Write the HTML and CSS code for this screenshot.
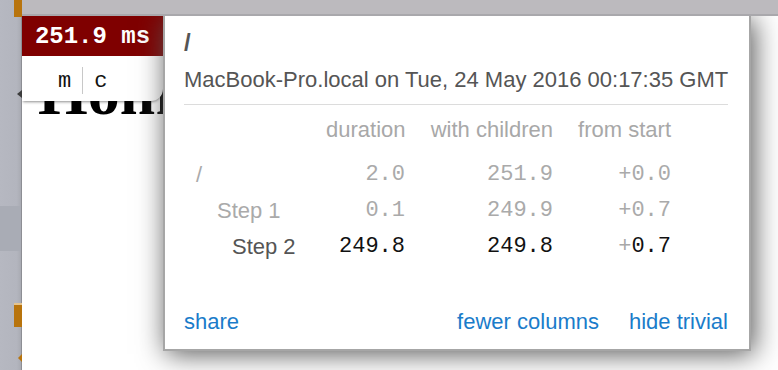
FILE: index.html
```html
<!DOCTYPE html>
<html lang="en">
<head>
    <meta charset="UTF-8">
    <meta name="viewport" content="width=device-width, initial-scale=1.0">
    <title>Home</title>
    <link rel="stylesheet" href="styles.css">
</head>
<body>

<div class="screen">
    <aside class="dock">
        <span class="dock-tab"></span>
        <span class="dock-arrow"></span>
        <span class="dock-band"></span>
        <span class="dock-folder"></span>
        <span class="dock-pin"></span>
    </aside>

    <div class="window">
        <div class="toolbar"></div>

        <main class="page">
            <h1 class="page-title">Home</h1>

            <!-- profiler badge, top left -->
            <div class="profiler-results">
                <div class="profiler-button">251.9 ms</div>
                <div class="profiler-controls">
                    <span class="profiler-key">m</span>
                    <span class="profiler-sep"></span>
                    <span class="profiler-key">c</span>
                </div>
            </div>

            <!-- timing popup -->
            <div class="profiler-popup">
                <div class="profiler-name">/</div>
                <div class="profiler-server">MacBook-Pro.local on Tue, 24 May 2016 00:17:35 GMT</div>
                <div class="profiler-rule"></div>

                <table class="profiler-timings">
                    <colgroup>
                        <col class="col-label">
                        <col class="col-duration">
                        <col class="col-children">
                        <col class="col-start">
                    </colgroup>
                    <thead>
                        <tr>
                            <th></th>
                            <th>duration</th>
                            <th>with children</th>
                            <th>from start</th>
                        </tr>
                    </thead>
                    <tbody>
                        <tr class="trivial">
                            <td class="label depth-0">/</td>
                            <td class="num">2.0</td>
                            <td class="num">251.9</td>
                            <td class="num">+0.0</td>
                        </tr>
                        <tr class="trivial">
                            <td class="label depth-1">Step 1</td>
                            <td class="num">0.1</td>
                            <td class="num">249.9</td>
                            <td class="num">+0.7</td>
                        </tr>
                        <tr>
                            <td class="label depth-2">Step 2</td>
                            <td class="num">249.8</td>
                            <td class="num">249.8</td>
                            <td class="num"><span class="plus">+</span>0.7</td>
                        </tr>
                    </tbody>
                </table>

                <div class="profiler-footer">
                    <a href="#" class="profiler-link">share</a>
                    <a href="#" class="profiler-link push">fewer columns</a>
                    <a href="#" class="profiler-link">hide trivial</a>
                </div>
            </div>
        </main>
    </div>
</div>

</body>
</html>
```

FILE: styles.css
```css
body {
    margin: 0;
    padding: 0;
    font-family: "Liberation Sans", Helvetica, Arial, sans-serif;
    overflow: hidden;
}
.screen {
    display: flex;
    height: 100vh;
}

/* left dock strip */
.dock {
    width: 21px;
    flex-shrink: 0;
    display: flex;
    flex-direction: column;
    background: linear-gradient(90deg, #b6b8c1 0%, #b3b5be 80%, #a9abb3 100%);
    border-right: 1px solid #8d8e94;
}
.dock-tab {
    display: block;
    width: 8px;
    height: 17px;
    margin-left: 14px;
    background: #b8740d;
}
.dock-arrow {
    display: block;
    width: 0;
    height: 0;
    margin: 73px 0 0 17px;
    border-right: 5px solid #3c3c3c;
    border-top: 4px solid transparent;
    border-bottom: 4px solid transparent;
}
.dock-band {
    display: block;
    height: 45px;
    margin-top: 108px;
    background: #a9acb5;
}
.dock-folder {
    display: block;
    width: 8px;
    height: 24px;
    margin: 52px 0 0 14px;
    background: #b8740d;
    border-top: 2px solid #e6c48e;
    box-sizing: border-box;
}
.dock-pin {
    display: block;
    width: 0;
    height: 0;
    margin: 27px 0 0 18px;
    border-right: 4px solid #b8740d;
    border-top: 4px solid transparent;
    border-bottom: 4px solid transparent;
}

.window {
    flex: 1;
    display: flex;
    flex-direction: column;
}
.toolbar {
    height: 14px;
    flex-shrink: 0;
    background: #bcbabe;
    border-bottom: 2px solid #a9a8ac;
}
.page {
    flex: 1;
    position: relative;
    background: white;
    overflow: hidden;
}
.page-title {
    margin: 45px 0 0 16px;
    font-family: "Liberation Serif", "Times New Roman", serif;
    font-size: 64px;
    line-height: 64px;
    font-weight: bold;
    color: #000;
    white-space: nowrap;
}

/* profiler badge */
.profiler-results {
    position: absolute;
    top: 0;
    left: 0;
    width: 141px;
    z-index: 2;
}
.profiler-button {
    height: 40px;
    padding-top: 2px;
    box-sizing: border-box;
    line-height: 38px;
    text-align: center;
    background: #7f0000;
    color: white;
    font-family: "Liberation Mono", "Courier New", monospace;
    font-size: 24px;
    font-weight: bold;
    white-space: pre;
}
.profiler-controls {
    display: flex;
    align-items: center;
    height: 45px;
    padding: 6px 0 0 36px;
    box-sizing: border-box;
    background: white;
    border-bottom-right-radius: 12px;
    box-shadow: 0 2px 3px -1px rgba(0, 0, 0, 0.45);
}
.profiler-key {
    font-family: "Liberation Mono", "Courier New", monospace;
    font-size: 22px;
    line-height: 27px;
    color: #111;
}
.profiler-sep {
    width: 1px;
    height: 27px;
    margin: -3px 11px 0 11px;
    background: #c8c8c8;
}

/* popup */
.profiler-popup {
    position: absolute;
    top: 0;
    left: 141px;
    width: 588px;
    height: 335px;
    box-sizing: border-box;
    padding: 13px 21px 15px 19px;
    display: flex;
    flex-direction: column;
    background: white;
    border: 2px solid #a6a6a6;
    border-top: none;
    box-shadow: 3px 3px 26px #555;
    z-index: 3;
}
.profiler-name {
    font-size: 24px;
    line-height: 28px;
    font-weight: bold;
    color: #555;
}
.profiler-server {
    margin-top: 10px;
    font-size: 22px;
    line-height: 25px;
    color: #555;
    white-space: nowrap;
}
.profiler-rule {
    height: 1px;
    margin-top: 12px;
    background: #dcdcdc;
}

.profiler-timings {
    margin-top: 7px;
    width: 487px;
    table-layout: fixed;
    border-collapse: collapse;
    font-size: 22px;
}
.col-label { width: 142px; }
.col-duration { width: 79px; }
.col-children { width: 148px; }
.col-start { width: 118px; }
.profiler-timings th,
.profiler-timings td {
    padding: 0;
    line-height: 36px;
    white-space: nowrap;
}
.profiler-timings th {
    padding-bottom: 9px;
    text-align: right;
    font-weight: normal;
    color: #a8a8a8;
}
.label {
    text-align: left;
    color: #555;
}
.depth-0 { padding-left: 12px !important; }
.depth-1 { padding-left: 33px !important; }
.depth-2 { padding-left: 48px !important; }
.num {
    text-align: right;
    font-family: "Liberation Mono", "Courier New", monospace;
    font-size: 22px;
    color: #111;
}
.plus {
    color: #a8a8a8;
}
.trivial .label,
.trivial .num {
    color: #aaa;
}

.profiler-footer {
    margin-top: auto;
    display: flex;
    gap: 30px;
    font-size: 22px;
    line-height: 25px;
}
.profiler-link {
    color: #1a7cca;
    text-decoration: none;
}
.push {
    margin-left: auto;
}
```
